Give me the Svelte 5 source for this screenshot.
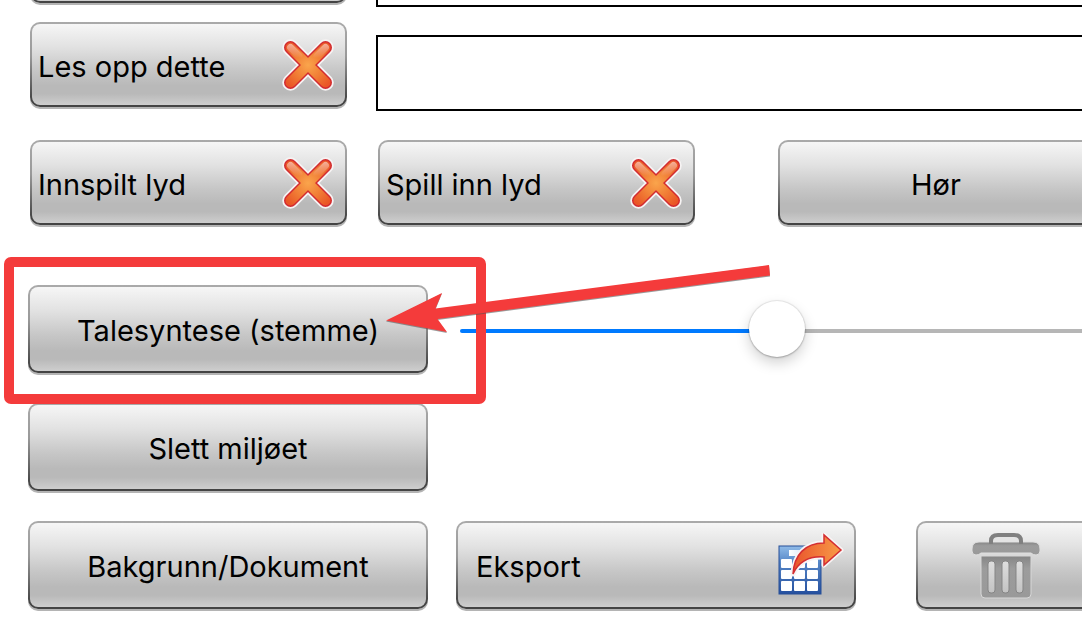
<script>
  let volume = $state(50);
</script>

{#snippet cross()}
  <svg class="cross" viewBox="0 0 52 52" width="52" height="52" aria-hidden="true">
    <defs>
      <radialGradient id="crossFill" cx="26" cy="26" r="28" gradientUnits="userSpaceOnUse">
        <stop offset="0" stop-color="#faa54c" />
        <stop offset="0.5" stop-color="#f17f36" />
        <stop offset="1" stop-color="#ea5526" />
      </radialGradient>
      <linearGradient id="crossShine" x1="0" y1="3" x2="0" y2="19" gradientUnits="userSpaceOnUse">
        <stop offset="0" stop-color="#fff" stop-opacity="0.6" />
        <stop offset="1" stop-color="#fff" stop-opacity="0" />
      </linearGradient>
    </defs>
    <g fill="none" stroke-linecap="round">
      <path d="M8.500 8.500 43.500 43.500M43.500 8.500 8.500 43.500" stroke="#f6f3f3" stroke-width="16.500" />
      <path d="M8.500 8.500 43.500 43.500M43.500 8.500 8.500 43.500" stroke="#d22b30" stroke-width="13" />
      <path d="M8.500 8.500 43.500 43.500M43.500 8.500 8.500 43.500" stroke="url(#crossFill)" stroke-width="10" />
      <path d="M8.500 8.500 17 17M43.500 8.500 35 17" stroke="url(#crossShine)" stroke-width="7" />
    </g>
  </svg>
{/snippet}

<main class="page">
  <div class="row fields">
    <button class="btn small above" type="button" aria-label="Tekst"></button>
    <input class="box upper" type="text" aria-label="Tekst" />
  </div>

  <div class="row fields">
    <button class="btn small split" type="button"><span>Les opp dette</span>{@render cross()}</button>
    <input class="box" type="text" aria-label="Les opp dette" />
  </div>

  <div class="row sound">
    <button class="btn small split" type="button"><span>Innspilt lyd</span>{@render cross()}</button>
    <button class="btn small split" type="button"><span>Spill inn lyd</span>{@render cross()}</button>
    <button class="btn small hear" type="button"><span>Hør</span></button>
  </div>

  <div class="row voice">
    <button class="btn" type="button"><span>Talesyntese (stemme)</span></button>
    <input
      class="slider"
      type="range"
      min="0"
      max="100"
      bind:value={volume}
      style="--fill: {volume}%"
      aria-label="Talesyntese (stemme)"
    />
    <div class="frame"></div>
    <svg class="arrow" viewBox="380 260 400 80" width="400" height="80" aria-hidden="true">
      <path
        d="M386 321.500 447 333 437.500 320 770 276.500 769 265.500 435.500 309.500 442 293.500Z"
        fill="#555"
        opacity="0.6"
      />
      <path d="M386 320.500 447 332 437.500 319 770 275.500 769 265 435.500 308.500 442 293Z" fill="#f43b3b" />
    </svg>
  </div>

  <div class="row">
    <button class="btn" type="button"><span>Slett miljøet</span></button>
  </div>

  <div class="row">
    <button class="btn" type="button"><span>Bakgrunn/Dokument</span></button>
    <button class="btn split export" type="button">
      <span>Eksport</span>
      <svg viewBox="0 0 68 66" width="68" height="66" aria-hidden="true">
        <defs>
          <linearGradient id="sheet" x1="0" y1="0" x2="0" y2="1">
            <stop offset="0" stop-color="#8fbbe8" />
            <stop offset="0.35" stop-color="#5585c6" />
            <stop offset="1" stop-color="#25509f" />
          </linearGradient>
          <linearGradient id="header" x1="0" y1="0" x2="1" y2="0">
            <stop offset="0" stop-color="#fff" />
            <stop offset="1" stop-color="#b9d5f2" />
          </linearGradient>
          <linearGradient id="swoosh" x1="0" y1="0" x2="1" y2="0">
            <stop offset="0" stop-color="#e9542b" />
            <stop offset="1" stop-color="#f89b48" />
          </linearGradient>
        </defs>
        <rect x="3" y="13" width="42" height="48" fill="url(#sheet)" stroke="#264f97" stroke-width="1" />
        <rect x="13" y="17" width="26" height="6" fill="url(#header)" />
        <g fill="#fff">
          <rect x="5" y="26" width="11" height="9" rx="1" />
          <rect x="18" y="26" width="11" height="9" rx="1" />
          <rect x="31" y="26" width="11" height="9" rx="1" />
          <rect x="5" y="37" width="11" height="9" rx="1" />
          <rect x="18" y="37" width="11" height="9" rx="1" />
          <rect x="31" y="37" width="11" height="9" rx="1" />
          <rect x="5" y="48" width="11" height="10" rx="1" />
          <rect x="18" y="48" width="11" height="10" rx="1" />
          <rect x="31" y="48" width="11" height="10" rx="1" />
        </g>
        <path
          d="M17 41C18 22 29 10 48 10V2L65 17 48 32V24C34 23 23 28 17 41Z"
          fill="none"
          stroke="#f8f4f4"
          stroke-width="5"
          stroke-linejoin="round"
        />
        <path
          d="M17 41C18 22 29 10 48 10V2L65 17 48 32V24C34 23 23 28 17 41Z"
          fill="url(#swoosh)"
          stroke="#d42e32"
          stroke-width="1.500"
        />
      </svg>
    </button>
    <button class="btn trash" type="button" aria-label="Slett">
      <svg viewBox="0 0 72 68" width="72" height="68" aria-hidden="true">
        <defs>
          <linearGradient id="bin" x1="0" y1="0" x2="0" y2="1">
            <stop offset="0" stop-color="#858585" />
            <stop offset="0.3" stop-color="#9c9c9c" />
            <stop offset="1" stop-color="#999" />
          </linearGradient>
          <linearGradient id="slot" x1="0" y1="0" x2="0" y2="1">
            <stop offset="0" stop-color="#dedede" />
            <stop offset="1" stop-color="#c3c3c3" />
          </linearGradient>
        </defs>
        <path
          d="M8 10H62Q69 10 69 17V19Q69 23 65 23Q62 23 60 21H10Q8 23 5 23Q1 23 1 19V17Q1 10 8 10Z"
          fill="url(#bin)"
          stroke="#dedede"
          stroke-width="1"
        />
        <path d="M22 10V8Q22 4 27 4H43Q48 4 48 8V10Z" fill="#e4e4e4" />
        <path d="M20 12V9Q20 3 27 3H43Q50 3 50 9V12" fill="none" stroke="#808080" stroke-width="4" />
        <path d="M10 24H60V62Q60 66 56 66H14Q10 66 10 62Z" fill="url(#bin)" stroke="#d8d8d8" stroke-width="1" />
        <g fill="url(#slot)" stroke="#858585" stroke-width="1">
          <rect x="17" y="29" width="7" height="32" rx="3" />
          <rect x="31" y="29" width="7" height="32" rx="3" />
          <rect x="45" y="29" width="7" height="32" rx="3" />
        </g>
      </svg>
    </button>
  </div>
</main>

<style>
  :global(body) {
    background: #fff;
    overflow: hidden;
  }

  .page {
    box-sizing: border-box;
    width: calc(100% + 12px);
    margin-top: -96px;
    padding-left: 28px;
    font-family: Inter, "Liberation Sans", sans-serif;
    color: #000;
  }

  .row {
    display: flex;
    margin-bottom: 30px;
  }

  .fields {
    gap: 29px;
    padding-left: 2px;
    margin-bottom: 33px;
  }

  .sound {
    gap: 31px;
    padding-left: 2px;
    margin-bottom: 60px;
  }

  .voice {
    position: relative;
    gap: 32px;
  }

  .btn {
    box-sizing: border-box;
    display: flex;
    flex: none;
    align-items: center;
    justify-content: center;
    width: 400px;
    height: 88px;
    margin: 0;
    padding: 4px 6px 0;
    border: 2px solid transparent;
    border-radius: 10px;
    background:
      linear-gradient(#f6f6f6, #e2e2e2 28%, #c6c6c6 58%, #b9b9b9 76%, #b9b9b9 86%, #cecece) padding-box,
      linear-gradient(#aaa, #999 40%, #444 92%) border-box;
    box-shadow: 0 2px 0 #b4b4b4;
    color: inherit;
    font: 29px/36px Inter, "Liberation Sans", sans-serif;
    white-space: nowrap;
  }

  .btn svg {
    display: block;
    flex: none;
    margin-top: -2px;
  }

  .small {
    width: 317px;
    height: 85px;
  }

  .above {
    margin: 14px 0 -14px;
  }

  .split {
    justify-content: space-between;
  }

  .btn .cross {
    margin-top: -4px;
    margin-right: 5px;
  }

  .hear {
    flex: 1;
    margin-left: 52px;
  }

  .export {
    margin-left: 28px;
    padding-right: 10px;
    padding-left: 18px;
  }

  .trash {
    flex: 1;
    margin-left: 60px;
    padding-left: 10px;
  }

  .box {
    box-sizing: border-box;
    flex: 1;
    min-width: 0;
    height: 76px;
    margin: 13px 0 -4px;
    padding: 0 12px;
    border: 2px solid #000;
    border-radius: 0;
    background: #fff;
    font: 29px/36px Inter, "Liberation Sans", sans-serif;
  }

  .upper {
    margin: 27px 0 -18px;
  }

  .slider {
    box-sizing: border-box;
    flex: 1;
    min-width: 0;
    height: 88px;
    margin: 0;
    padding: 4px 0 0;
    appearance: none;
    background: none;
  }

  .slider::-webkit-slider-runnable-track {
    height: 4px;
    border-radius: 2px;
    background: linear-gradient(to right, #007aff var(--fill), #b6b6b6 var(--fill));
  }

  .slider::-webkit-slider-thumb {
    box-sizing: border-box;
    width: 56px;
    height: 56px;
    margin-top: -28px;
    appearance: none;
    border: 0;
    border-radius: 50%;
    background: #fff;
    box-shadow:
      0 0 1px 1px rgba(0, 0, 0, 0.08),
      0 1px 2px rgba(0, 0, 0, 0.2),
      0 6px 14px rgba(0, 0, 0, 0.18);
  }

  .frame {
    position: absolute;
    top: -28px;
    left: -24px;
    box-sizing: border-box;
    width: 482px;
    height: 147px;
    border: 10px solid #f43b3b;
    border-radius: 7px;
    pointer-events: none;
  }

  .arrow {
    position: absolute;
    top: -25px;
    left: 352px;
    pointer-events: none;
  }
</style>
